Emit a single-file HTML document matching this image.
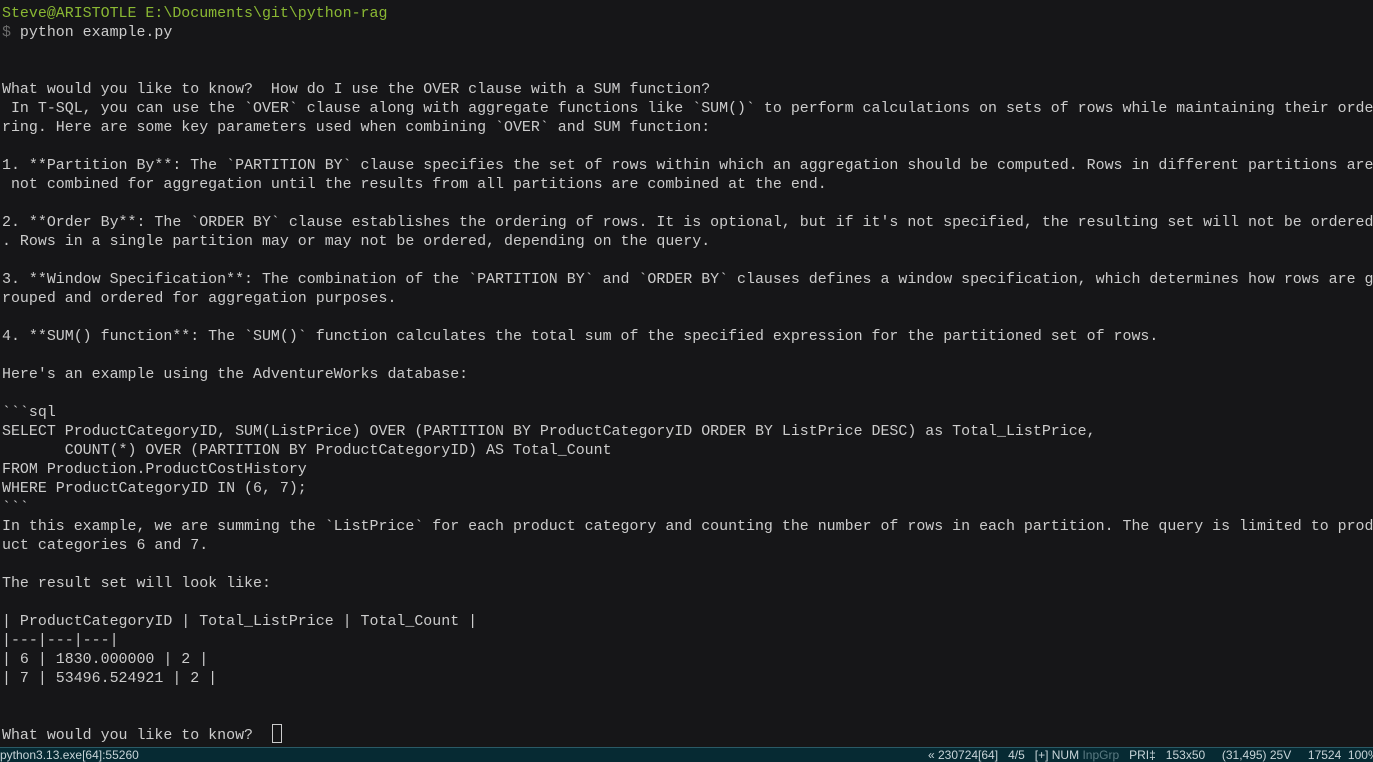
<!DOCTYPE html>
<html><head><meta charset="utf-8"><style>
html,body{margin:0;padding:0;background:#0c0c0c;}
body{width:1373px;height:761px;overflow:hidden;position:relative;background:#161618;}
pre{margin:0;position:absolute;left:2px;top:5px;width:1371px;overflow:hidden;font-family:"Liberation Mono",monospace;font-size:14.95px;line-height:19px;color:#cccccc;white-space:pre;}
.g{color:#8ab833}.d{color:#6a6a6a}
.cur{position:absolute;left:272px;top:724px;width:8px;height:17px;border:1px solid #cccccc;}
.sb{position:absolute;left:0;top:747px;width:1373px;height:14px;background:#062a33;border-top:1px solid #2a5a66;font-family:"Liberation Sans",sans-serif;font-size:12px;line-height:15px;color:#c8d4d8;white-space:pre;overflow:hidden;}
.sb .l{position:absolute;left:0;top:0}
.sb .r{position:absolute;left:928px;top:0}
</style></head><body>
<pre><span class="g">Steve@ARISTOTLE E:\Documents\git\python-rag</span>
<span class="d">$</span> python example.py


What would you like to know?  How do I use the OVER clause with a SUM function?
 In T-SQL, you can use the &#96;OVER&#96; clause along with aggregate functions like &#96;SUM()&#96; to perform calculations on sets of rows while maintaining their orde
ring. Here are some key parameters used when combining &#96;OVER&#96; and SUM function:

1. **Partition By**: The &#96;PARTITION BY&#96; clause specifies the set of rows within which an aggregation should be computed. Rows in different partitions are
 not combined for aggregation until the results from all partitions are combined at the end.

2. **Order By**: The &#96;ORDER BY&#96; clause establishes the ordering of rows. It is optional, but if it's not specified, the resulting set will not be ordered
. Rows in a single partition may or may not be ordered, depending on the query.

3. **Window Specification**: The combination of the &#96;PARTITION BY&#96; and &#96;ORDER BY&#96; clauses defines a window specification, which determines how rows are g
rouped and ordered for aggregation purposes.

4. **SUM() function**: The &#96;SUM()&#96; function calculates the total sum of the specified expression for the partitioned set of rows.

Here's an example using the AdventureWorks database:

&#96;&#96;&#96;sql
SELECT ProductCategoryID, SUM(ListPrice) OVER (PARTITION BY ProductCategoryID ORDER BY ListPrice DESC) as Total_ListPrice,
       COUNT(*) OVER (PARTITION BY ProductCategoryID) AS Total_Count
FROM Production.ProductCostHistory
WHERE ProductCategoryID IN (6, 7);
&#96;&#96;&#96;
In this example, we are summing the &#96;ListPrice&#96; for each product category and counting the number of rows in each partition. The query is limited to prod
uct categories 6 and 7.

The result set will look like:

| ProductCategoryID | Total_ListPrice | Total_Count |
|---|---|---|
| 6 | 1830.000000 | 2 |
| 7 | 53496.524921 | 2 |


What would you like to know?  </pre>
<div class="cur"></div>
<div class="sb"><span class="l">python3.13.exe[64]:55260</span><span class="r">« 230724[64]   4/5   [+] NUM <span style="color:#5a7a82">InpGrp</span>   PRI‡   153x50     (31,495) 25V     17524  100%  </span></div>
</body></html>
